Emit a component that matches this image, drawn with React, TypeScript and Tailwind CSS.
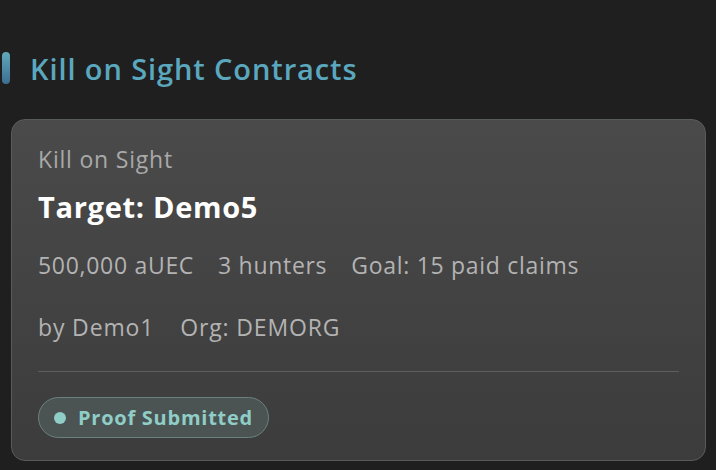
export default function App() {
  return (
    <div
      className="w-[716px] h-[470px] bg-[#1f1f1f] overflow-hidden pt-[52px]"
      style={{ fontFamily: '"Open Sans", "Noto Sans", sans-serif' }}
    >
      <div className="flex items-center h-[32px] pl-[2px]">
        <div className="w-[8px] h-[32px] rounded-full bg-gradient-to-b from-[#62a9ba] to-[#3c6e92]" />
        <h2 className="ml-[20px] text-[29px] tracking-[0.9px] font-semibold text-[#5aa7be] leading-none">
          Kill on Sight Contracts
        </h2>
      </div>
      <div className="mt-[35px] ml-[11px] w-[695px] h-[342px] rounded-[14px] border border-[#575c5b] bg-gradient-to-b from-[#4a4a4a] to-[#3c3c3c] px-[26px] pt-[25px]">
        <div className="text-[23px] tracking-[0.8px] text-[#a9a9a9] leading-[28px]">Kill on Sight</div>
        <div className="mt-[17px] text-[29px] tracking-[0.7px] font-bold text-white leading-[34px]">Target: Demo5</div>
        <div className="mt-[27px] flex gap-[24px] text-[23px] tracking-[0.7px] text-[#b3b3b3] leading-[28px]">
          <span>500,000 aUEC</span>
          <span>3 hunters</span>
          <span>Goal: 15 paid claims</span>
        </div>
        <div className="mt-[34px] flex gap-[26px] text-[23px] tracking-[0.85px] text-[#b3b3b3] leading-[28px]">
          <span>by Demo1</span>
          <span>Org: DEMORG</span>
        </div>
        <div className="mt-[30px] h-[1px] bg-[#5e5e5e]" />
        <div className="mt-[25px] inline-flex items-center h-[41px] rounded-full border-[1.5px] border-[#6a827e] bg-[#4b5453] pl-[15px] pr-[15px]">
          <span className="w-[12px] h-[12px] rounded-full bg-[#8fcdc6]" />
          <span className="ml-[12px] text-[20px] tracking-[0.75px] font-bold text-[#8fcdc6] leading-none">Proof Submitted</span>
        </div>
      </div>
    </div>
  );
}
